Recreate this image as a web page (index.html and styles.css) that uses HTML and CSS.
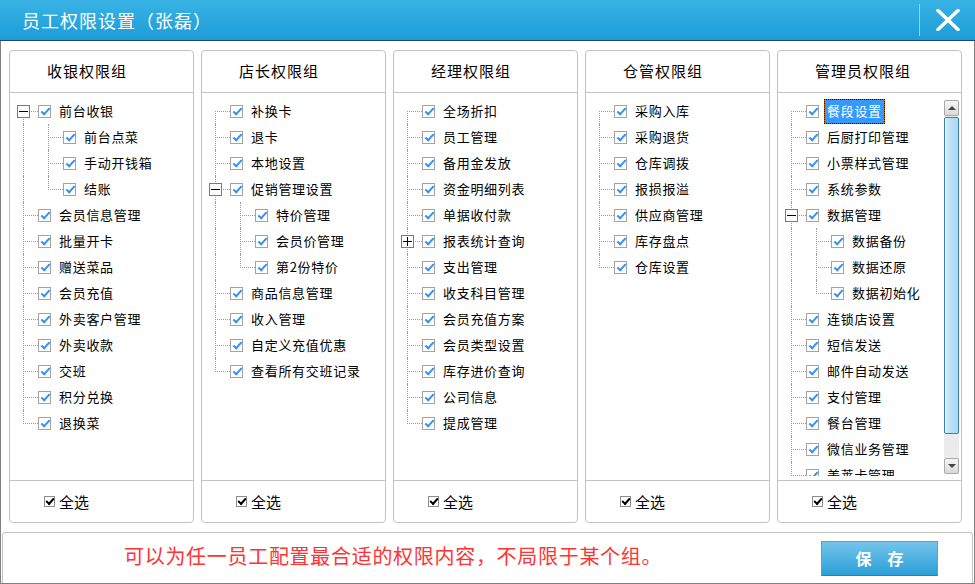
FILE: index.html
```html
<!DOCTYPE html>
<html lang="zh-CN">
<head>
<meta charset="utf-8">
<title>员工权限设置</title>
<link rel="stylesheet" href="styles.css">
</head>
<body>
<div class="window">
  <div class="titlebar">
    <div class="title">员工权限设置（张磊）</div>
    <div class="sep"></div>
    <div class="close">
      <svg width="24" height="22" viewBox="0 0 24 22"><path d="M2 1.5 L22 20.5 M22 1.5 L2 20.5" stroke="#fff" stroke-width="3.6" stroke-linecap="round" fill="none"/></svg>
    </div>
  </div>
  <div class="content">
    <div class="panels">
      <!-- panel 1 -->
      <div class="panel">
        <div class="phead">收银权限组</div>
        <div class="pbody">
          <div class="list">
            <div class="row"><span class="c first"><i class="exp"></i></span><span class="cb"></span><span class="lbl">前台收银</span></div>
            <div class="row"><span class="g pipe"></span><span class="c tee"></span><span class="cb"></span><span class="lbl">前台点菜</span></div>
            <div class="row"><span class="g pipe"></span><span class="c tee"></span><span class="cb"></span><span class="lbl">手动开钱箱</span></div>
            <div class="row"><span class="g pipe"></span><span class="c last"></span><span class="cb"></span><span class="lbl">结账</span></div>
            <div class="row"><span class="c tee"></span><span class="cb"></span><span class="lbl">会员信息管理</span></div>
            <div class="row"><span class="c tee"></span><span class="cb"></span><span class="lbl">批量开卡</span></div>
            <div class="row"><span class="c tee"></span><span class="cb"></span><span class="lbl">赠送菜品</span></div>
            <div class="row"><span class="c tee"></span><span class="cb"></span><span class="lbl">会员充值</span></div>
            <div class="row"><span class="c tee"></span><span class="cb"></span><span class="lbl">外卖客户管理</span></div>
            <div class="row"><span class="c tee"></span><span class="cb"></span><span class="lbl">外卖收款</span></div>
            <div class="row"><span class="c tee"></span><span class="cb"></span><span class="lbl">交班</span></div>
            <div class="row"><span class="c tee"></span><span class="cb"></span><span class="lbl">积分兑换</span></div>
            <div class="row"><span class="c last"></span><span class="cb"></span><span class="lbl">退换菜</span></div>
          </div>
        </div>
        <div class="pfoot"><span class="fcb"></span><span class="flbl">全选</span></div>
      </div>
      <!-- panel 2 -->
      <div class="panel">
        <div class="phead">店长权限组</div>
        <div class="pbody">
          <div class="list">
            <div class="row"><span class="c first"></span><span class="cb"></span><span class="lbl">补换卡</span></div>
            <div class="row"><span class="c tee"></span><span class="cb"></span><span class="lbl">退卡</span></div>
            <div class="row"><span class="c tee"></span><span class="cb"></span><span class="lbl">本地设置</span></div>
            <div class="row"><span class="c tee"><i class="exp"></i></span><span class="cb"></span><span class="lbl">促销管理设置</span></div>
            <div class="row"><span class="g pipe"></span><span class="c tee"></span><span class="cb"></span><span class="lbl">特价管理</span></div>
            <div class="row"><span class="g pipe"></span><span class="c tee"></span><span class="cb"></span><span class="lbl">会员价管理</span></div>
            <div class="row"><span class="g pipe"></span><span class="c last"></span><span class="cb"></span><span class="lbl">第2份特价</span></div>
            <div class="row"><span class="c tee"></span><span class="cb"></span><span class="lbl">商品信息管理</span></div>
            <div class="row"><span class="c tee"></span><span class="cb"></span><span class="lbl">收入管理</span></div>
            <div class="row"><span class="c tee"></span><span class="cb"></span><span class="lbl">自定义充值优惠</span></div>
            <div class="row"><span class="c last"></span><span class="cb"></span><span class="lbl">查看所有交班记录</span></div>
          </div>
        </div>
        <div class="pfoot"><span class="fcb"></span><span class="flbl">全选</span></div>
      </div>
      <!-- panel 3 -->
      <div class="panel">
        <div class="phead">经理权限组</div>
        <div class="pbody">
          <div class="list">
            <div class="row"><span class="c first"></span><span class="cb"></span><span class="lbl">全场折扣</span></div>
            <div class="row"><span class="c tee"></span><span class="cb"></span><span class="lbl">员工管理</span></div>
            <div class="row"><span class="c tee"></span><span class="cb"></span><span class="lbl">备用金发放</span></div>
            <div class="row"><span class="c tee"></span><span class="cb"></span><span class="lbl">资金明细列表</span></div>
            <div class="row"><span class="c tee"></span><span class="cb"></span><span class="lbl">单据收付款</span></div>
            <div class="row"><span class="c tee"><i class="exp plus"></i></span><span class="cb"></span><span class="lbl">报表统计查询</span></div>
            <div class="row"><span class="c tee"></span><span class="cb"></span><span class="lbl">支出管理</span></div>
            <div class="row"><span class="c tee"></span><span class="cb"></span><span class="lbl">收支科目管理</span></div>
            <div class="row"><span class="c tee"></span><span class="cb"></span><span class="lbl">会员充值方案</span></div>
            <div class="row"><span class="c tee"></span><span class="cb"></span><span class="lbl">会员类型设置</span></div>
            <div class="row"><span class="c tee"></span><span class="cb"></span><span class="lbl">库存进价查询</span></div>
            <div class="row"><span class="c tee"></span><span class="cb"></span><span class="lbl">公司信息</span></div>
            <div class="row"><span class="c last"></span><span class="cb"></span><span class="lbl">提成管理</span></div>
          </div>
        </div>
        <div class="pfoot"><span class="fcb"></span><span class="flbl">全选</span></div>
      </div>
      <!-- panel 4 -->
      <div class="panel">
        <div class="phead">仓管权限组</div>
        <div class="pbody">
          <div class="list">
            <div class="row"><span class="c first"></span><span class="cb"></span><span class="lbl">采购入库</span></div>
            <div class="row"><span class="c tee"></span><span class="cb"></span><span class="lbl">采购退货</span></div>
            <div class="row"><span class="c tee"></span><span class="cb"></span><span class="lbl">仓库调拨</span></div>
            <div class="row"><span class="c tee"></span><span class="cb"></span><span class="lbl">报损报溢</span></div>
            <div class="row"><span class="c tee"></span><span class="cb"></span><span class="lbl">供应商管理</span></div>
            <div class="row"><span class="c tee"></span><span class="cb"></span><span class="lbl">库存盘点</span></div>
            <div class="row"><span class="c last"></span><span class="cb"></span><span class="lbl">仓库设置</span></div>
          </div>
        </div>
        <div class="pfoot"><span class="fcb"></span><span class="flbl">全选</span></div>
      </div>
      <!-- panel 5 -->
      <div class="panel">
        <div class="phead">管理员权限组</div>
        <div class="pbody">
          <div class="list">
            <div class="row"><span class="c first"></span><span class="cb"></span><span class="lbl sel">餐段设置</span></div>
            <div class="row"><span class="c tee"></span><span class="cb"></span><span class="lbl">后厨打印管理</span></div>
            <div class="row"><span class="c tee"></span><span class="cb"></span><span class="lbl">小票样式管理</span></div>
            <div class="row"><span class="c tee"></span><span class="cb"></span><span class="lbl">系统参数</span></div>
            <div class="row"><span class="c tee"><i class="exp"></i></span><span class="cb"></span><span class="lbl">数据管理</span></div>
            <div class="row"><span class="g pipe"></span><span class="c tee"></span><span class="cb"></span><span class="lbl">数据备份</span></div>
            <div class="row"><span class="g pipe"></span><span class="c tee"></span><span class="cb"></span><span class="lbl">数据还原</span></div>
            <div class="row"><span class="g pipe"></span><span class="c last"></span><span class="cb"></span><span class="lbl">数据初始化</span></div>
            <div class="row"><span class="c tee"></span><span class="cb"></span><span class="lbl">连锁店设置</span></div>
            <div class="row"><span class="c tee"></span><span class="cb"></span><span class="lbl">短信发送</span></div>
            <div class="row"><span class="c tee"></span><span class="cb"></span><span class="lbl">邮件自动发送</span></div>
            <div class="row"><span class="c tee"></span><span class="cb"></span><span class="lbl">支付管理</span></div>
            <div class="row"><span class="c tee"></span><span class="cb"></span><span class="lbl">餐台管理</span></div>
            <div class="row"><span class="c tee"></span><span class="cb"></span><span class="lbl">微信业务管理</span></div>
            <div class="row"><span class="c tee"></span><span class="cb"></span><span class="lbl">美莱卡管理</span></div>
          </div>
          <div class="sb">
            <div class="sb-btn"><span class="arr up"></span></div>
            <div class="sb-thumb"></div>
            <div class="sb-track"></div>
            <div class="sb-btn"><span class="arr down"></span></div>
          </div>
        </div>
        <div class="pfoot"><span class="fcb"></span><span class="flbl">全选</span></div>
      </div>
    </div>
    <div class="bottom">
      <div class="tip">可以为任一员工配置最合适的权限内容，不局限于某个组。</div>
      <div class="save">保　存</div>
    </div>
  </div>
</div>
</body>
</html>
```

FILE: styles.css
```css
* { box-sizing: border-box; }

body {
  margin: 0;
  font-family: "Noto Sans CJK SC", "Noto Sans", "DejaVu Sans", sans-serif;
  color: #000;
  background: #fff;
}

.window {
  width: 975px;
  height: 584px;
  display: flex;
  flex-direction: column;
  overflow: hidden;
  background: #fff;
}

/* title bar */
.titlebar {
  height: 41px;
  flex: none;
  display: flex;
  align-items: center;
  padding-left: 22px;
  background: linear-gradient(#39b3e5, #1c9cd7);
  border-bottom: 1px solid #1b4b73;
}
.title {
  flex: 1;
  color: #fff;
  font-size: 18px;
  line-height: 1;
  letter-spacing: 1px;
  padding-bottom: 1px;
}
.sep {
  width: 1px;
  height: 32px;
  background: #90d5f2;
  margin-right: 16px;
}
.close {
  width: 24px;
  height: 22px;
  margin-right: 15px;
  display: flex;
}

/* content */
.content {
  flex: 1;
  display: flex;
  flex-direction: column;
  padding-top: 9px;
  border-left: 1px solid #7f7f7f;
  border-right: 1px solid #7f7f7f;
  border-bottom: 1px solid #7f7f7f;
}
.panels {
  display: flex;
  gap: 7px;
  height: 473px;
  margin-left: 8px;
}
.panel {
  width: 185px;
  height: 473px;
  border: 1px solid #c3c3c3;
  border-radius: 4px;
  display: flex;
  flex-direction: column;
}
.phead {
  height: 42px;
  flex: none;
  border-bottom: 1px solid #c3c3c3;
  padding-left: 37px;
  padding-bottom: 3px;
  display: flex;
  align-items: center;
  font-size: 15px;
  letter-spacing: 1px;
}
.pbody {
  height: 387px;
  flex: none;
  padding: 5px 0 4px;
  display: flex;
  overflow: hidden;
}
.list {
  flex: 1;
  overflow: hidden;
}
.pfoot {
  height: 42px;
  flex: none;
  border-top: 1px solid #c3c3c3;
  padding-left: 34px;
  display: flex;
  align-items: center;
  font-size: 15px;
}

/* tree rows */
.row {
  height: 26px;
  display: flex;
  align-items: flex-start;
  padding-left: 13px;
  font-size: 13px;
  white-space: nowrap;
}
.g, .c {
  height: 26px;
  flex: none;
  position: relative;
}
.g { width: 25px; }
.c { width: 15px; }
.g.pipe::before,
.c::before {
  content: "";
  position: absolute;
  left: 0;
  border-left: 1px dotted #9a9a9a;
}
.g.pipe::before { top: 0; bottom: 0; }
.c.first::before { top: 13px; bottom: 0; }
.c.tee::before { top: 0; bottom: 0; }
.c.last::before { top: 0; height: 14px; }
.c::after {
  content: "";
  position: absolute;
  left: 2px;
  right: 0;
  top: 13px;
  border-top: 1px dotted #9a9a9a;
}
.exp {
  position: absolute;
  left: -6px;
  top: 7px;
  width: 13px;
  height: 13px;
  border: 1px solid #7a7a7a;
  background: #fff;
  z-index: 1;
}
.exp::before {
  content: "";
  position: absolute;
  left: 1px;
  right: 1px;
  top: 5px;
  height: 1px;
  background: #000;
}
.exp.plus::after {
  content: "";
  position: absolute;
  top: 1px;
  bottom: 1px;
  left: 5px;
  width: 1px;
  background: #000;
}

.cb {
  width: 13px;
  height: 13px;
  margin-top: 7px;
  flex: none;
  border: 1px solid #a3a3a3;
  background: #fff;
  position: relative;
}
.cb::after {
  content: "";
  position: absolute;
  left: 2px;
  top: 2px;
  width: 7px;
  height: 3px;
  border-left: 2px solid #3391ef;
  border-bottom: 2px solid #3391ef;
  transform: rotate(-48deg);
}
.lbl {
  margin-left: 5px;
  margin-top: 1px;
  padding: 0 2px;
  height: 25px;
  line-height: 21px;
  border: 1px solid transparent;
  letter-spacing: 0.7px;
}
.lbl.sel {
  background: #3399ff;
  color: #fff;
  border-color: #cc6600;
  outline: 1px dotted #000;
  outline-offset: -1px;
}

/* footer */
.fcb {
  width: 11px;
  height: 11px;
  border: 1px solid #8c8c8c;
  background: #fff;
  position: relative;
  flex: none;
}
.fcb::after {
  content: "";
  position: absolute;
  left: 1px;
  top: 1px;
  width: 6px;
  height: 3px;
  border-left: 2px solid #000;
  border-bottom: 2px solid #000;
  transform: rotate(-48deg);
}
.flbl {
  margin-left: 4px;
  line-height: 1;
}

/* scrollbar */
.sb {
  width: 15px;
  height: 374px;
  margin: 2px 2px 0 0;
  flex: none;
  display: flex;
  flex-direction: column;
  background: #ebebeb;
}
.sb-btn {
  height: 16px;
  flex: none;
  border: 1px solid #a9a9a9;
  border-radius: 2px;
  background: linear-gradient(#f6f6f6, #d9d9d9);
  display: flex;
  align-items: center;
  justify-content: center;
}
.arr {
  width: 0;
  height: 0;
  border-left: 4px solid transparent;
  border-right: 4px solid transparent;
}
.arr.up { border-bottom: 4px solid #444; }
.arr.down { border-top: 4px solid #444; }
.sb-thumb {
  height: 317px;
  margin-top: 1px;
  flex: none;
  border: 1px solid #3c7fb1;
  border-radius: 2px;
  background: linear-gradient(90deg, #e3f2fc, #bfe3f8 30%, #a9d8f4);
}
.sb-track {
  flex: 1;
  background: #ebebeb;
}

/* bottom bar */
.bottom {
  margin: 9px 1px 0 1px;
  height: 51px;
  flex: none;
  border: 1px solid #c3c3c3;
  border-bottom: none;
  border-radius: 4px 4px 0 0;
  display: flex;
  align-items: center;
  padding-left: 121px;
}
.tip {
  color: #ff3333;
  font-size: 20px;
  line-height: 1;
  letter-spacing: 0.7px;
  padding-bottom: 4px;
}
.save {
  margin-left: auto;
  margin-right: 34px;
  width: 117px;
  height: 35px;
  border: 1px solid #4aa7dd;
  border-bottom-color: #1d84bf;
  background: linear-gradient(#74c5eb, #2a9fd8);
  color: #fff;
  font-size: 16px;
  font-weight: bold;
  display: flex;
  align-items: center;
  justify-content: center;
}
```
